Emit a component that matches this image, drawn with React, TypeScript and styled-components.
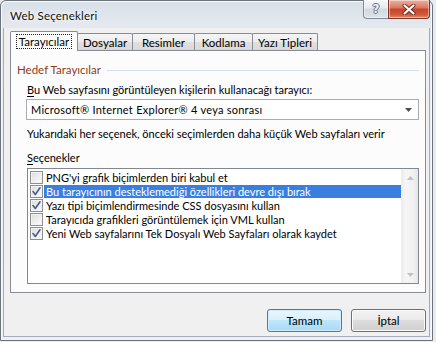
import React from 'react';
import styled, { createGlobalStyle } from 'styled-components';

const FONT = `"Lato", "Noto Sans", sans-serif`;

const GlobalStyle = createGlobalStyle`
  html, body { margin: 0; padding: 0; }
  body {
    width: 436px; height: 342px; overflow: hidden;
    background: #e9edf1;
    font-family: ${FONT};
    font-size: 11px;
    color: #000;
  }
  * { box-sizing: border-box; }
`;

const Window = styled.div`
  width: 433px;
  height: 341px;
  border: 1px solid #6c727a;
  border-radius: 6px 6px 0 0;
  background: linear-gradient(180deg, #d8e0e8 0px, #e4e9ef 26px, #edf0f4 100%);
  box-shadow: inset 1px 1px 0 #f8fafc, inset -1px 0 0 #f8fafc;
  display: flex;
  flex-direction: column;
`;

const TitleBar = styled.div`
  height: 27px;
  flex: none;
  display: flex;
  align-items: flex-start;
  padding: 0 2px 0 9px;
`;

const Title = styled.div`
  flex: 1;
  align-self: center;
  margin-top: 1px;
  font-size: 11.5px;
  letter-spacing: 0.2px;
  color: #111;
  text-shadow: 0 0 6px #ffffff, 0 0 3px #ffffff;
`;

const CaptionGroup = styled.div`
  display: flex;
  margin-top: -1px;
`;

const CaptionButton = styled.div<{ $variant: 'help' | 'close' }>`
  height: 19px;
  width: ${(p) => (p.$variant === 'close' ? 42 : 26)}px;
  margin-left: ${(p) => (p.$variant === 'close' ? -1 : 0)}px;
  border: 1px solid ${(p) => (p.$variant === 'close' ? '#7a3626' : '#7f8a97')};
  border-top: none;
  border-radius: ${(p) => (p.$variant === 'close' ? '0 0 4px 0' : '0 0 0 4px')};
  background: ${(p) =>
    p.$variant === 'close'
      ? 'linear-gradient(180deg, #eab2a3 0%, #dc7a61 42%, #c8462b 52%, #d0573a 80%, #e08a6c 100%)'
      : 'linear-gradient(180deg, #f6f8fa 0%, #e6ebf0 42%, #d2d9e1 52%, #dde3ea 100%)'};
  box-shadow: inset 0 0 0 1px rgba(255, 255, 255, 0.45);
  display: flex;
  align-items: center;
  justify-content: center;
`;

const HelpGlyph = styled.span`
  font-family: "DejaVu Sans", sans-serif;
  font-weight: bold;
  font-size: 12px;
  color: #eef2f6;
  text-shadow: -1px 0 #66717d, 1px 0 #66717d, 0 -1px #66717d, 0 1px #66717d;
  line-height: 1;
`;

const Client = styled.div`
  flex: 1;
  margin: 0 2px 3px 2px;
  background: #f0f0f0;
  border: 1px solid #a3acb7;
  border-top: none;
  display: flex;
  flex-direction: column;
  padding: 3px 3px 0 6px;
`;

const TabStrip = styled.div`
  display: flex;
  align-items: flex-end;
  height: 19px;
  position: relative;
  z-index: 1;
`;

const Tab = styled.div<{ $active?: boolean; $w: number }>`
  width: ${(p) => p.$w}px;
  height: ${(p) => (p.$active ? 20 : 17)}px;
  margin-bottom: ${(p) => (p.$active ? -1 : 0)}px;
  margin-left: -1px;
  &:first-child { margin-left: 0; }
  border: 1px solid #898c95;
  border-bottom: none;
  border-radius: 2px 2px 0 0;
  background: ${(p) =>
    p.$active ? '#fcfcfc' : 'linear-gradient(180deg, #f6f6f6 0%, #ececec 50%, #e0e0e0 51%, #d9d9d9 100%)'};
  position: relative;
  z-index: ${(p) => (p.$active ? 2 : 1)};
  display: flex;
  align-items: center;
  justify-content: center;
  padding-bottom: ${(p) => (p.$active ? 1 : 0)}px;
  font-size: 11.5px;
  color: #000;
`;

const FocusText = styled.span`
  outline: 1px dotted #222;
  padding: 0 2px;
  line-height: 13px;
`;

const Panel = styled.div`
  height: 243px;
  flex: none;
  border: 1px solid #898c95;
  background: #fcfcfc;
  padding: 11px 6px 0 6px;
  display: flex;
  flex-direction: column;
`;

const GroupHeader = styled.div`
  display: flex;
  align-items: center;
  gap: 6px;
  line-height: 15px;
  font-size: 11.5px;
  color: #8e3c20;
`;

const GroupLine = styled.div`
  flex: 1;
  height: 1px;
  background: #d6dde5;
  margin-top: 1px;
`;

const Section = styled.div`
  display: flex;
  flex-direction: column;
  padding-left: 10px;
`;

const Text = styled.div<{ $mt: number }>`
  margin-top: ${(p) => p.$mt}px;
  line-height: 15px;
  white-space: nowrap;
`;

const Combo = styled.div`
  margin-top: 2px;
  margin-left: -1px;
  height: 21px;
  border: 1px solid #a7abb2;
  background: #ffffff;
  display: flex;
  align-items: center;
  padding: 0 6px 0 4px;
`;

const ComboText = styled.span`
  flex: 1;
  white-space: nowrap;
  letter-spacing: 0.25px;
`;

const List = styled.div`
  margin-top: 3px;
  height: 116px;
  border: 1px solid #838790;
  background: #ffffff;
  display: flex;
`;

const Rows = styled.div`
  flex: 1;
  padding-top: 1px;
  display: flex;
  flex-direction: column;
`;

const Row = styled.div`
  height: 14px;
  display: flex;
  align-items: center;
  padding-left: 2px;
`;

const CheckBox = styled.div`
  width: 13px;
  height: 13px;
  flex: none;
  border: 1px solid #8e8f8f;
  background: linear-gradient(135deg, #dcdcdc 0%, #f0f0f0 60%, #fbfbfb 100%);
  box-shadow: inset 0 0 0 1px #f4f4f4;
  display: flex;
  align-items: center;
  justify-content: center;
`;

const RowLabel = styled.div<{ $selected?: boolean }>`
  flex: 1;
  margin-left: 1px;
  height: 13px;
  line-height: 13px;
  padding-left: 2px;
  white-space: nowrap;
  background: ${(p) => (p.$selected ? '#3a7fdf' : 'transparent')};
  color: ${(p) => (p.$selected ? '#ffffff' : '#000000')};
`;

const ScrollBar = styled.div`
  width: 17px;
  flex: none;
  background: linear-gradient(90deg, #ebebeb 0%, #f6f6f6 20%, #f1f1f1 70%, #e6e6e6 100%);
  border-left: 1px solid #f0f0f0;
  display: flex;
  flex-direction: column;
  justify-content: space-between;
`;

const ScrollArrow = styled.div`
  height: 17px;
  display: flex;
  align-items: center;
  justify-content: center;
`;

const ButtonRow = styled.div`
  margin-top: 16px;
  display: flex;
  justify-content: flex-end;
  gap: 9px;
`;

const Button = styled.div<{ $default?: boolean }>`
  width: 75px;
  height: 23px;
  border: 1px solid ${(p) => (p.$default ? '#3c7fb1' : '#707070')};
  border-radius: 3px;
  background: ${(p) =>
    p.$default
      ? 'linear-gradient(180deg, #eaf6fd 0%, #d9f0fc 45%, #bee6fd 50%, #a7d9f5 100%)'
      : 'linear-gradient(180deg, #f2f2f2 0%, #ebebeb 45%, #dddddd 50%, #cfcfcf 100%)'};
  box-shadow: inset 0 0 0 1px ${(p) => (p.$default ? '#d0ecfb' : '#fbfbfb')};
  display: flex;
  align-items: center;
  justify-content: center;
  font-size: 11.5px;
  color: #000;
`;

const U = styled.span`
  text-decoration: underline;
  text-underline-offset: 2px;
`;

const CheckMark = () => (
  <svg width="9" height="9" viewBox="0 0 9 9">
    <path d="M1 4.6 L3.3 7.5 L8 0.8" fill="none" stroke="#4a5c90" strokeWidth="1.6" strokeLinecap="round" strokeLinejoin="round" />
  </svg>
);

const CloseGlyph = () => (
  <svg width="14" height="11" viewBox="0 0 14 11">
    <path d="M2.5 1.5 L11.5 9.5 M11.5 1.5 L2.5 9.5" stroke="#6b2a1c" strokeWidth="4" strokeLinecap="round" />
    <path d="M2.5 1.5 L11.5 9.5 M11.5 1.5 L2.5 9.5" stroke="#ffffff" strokeWidth="2.2" strokeLinecap="round" />
  </svg>
);

const Arrow = ({ up, color }: { up?: boolean; color: string }) => (
  <svg width="7" height="4" viewBox="0 0 7 4">
    <path d={up ? 'M0 4 L3.5 0 L7 4 Z' : 'M0 0 L7 0 L3.5 4 Z'} fill={color} />
  </svg>
);

const tabs = [
  { label: 'Tarayıcılar', w: 68, active: true },
  { label: 'Dosyalar', w: 56 },
  { label: 'Resimler', w: 63 },
  { label: 'Kodlama', w: 59 },
  { label: 'Yazı Tipleri', w: 66 },
];

const options = [
  { label: "PNG'yi grafik biçimlerden biri kabul et", checked: false },
  { label: 'Bu tarayıcının desteklemediği özellikleri devre dışı bırak', checked: true, selected: true },
  { label: 'Yazı tipi biçimlendirmesinde CSS dosyasını kullan', checked: true },
  { label: 'Tarayıcıda grafikleri görüntülemek için VML kullan', checked: false },
  { label: 'Yeni Web sayfalarını Tek Dosyalı Web Sayfaları olarak kaydet', checked: true },
];

export default function App() {
  return (
    <>
      <GlobalStyle />
      <Window>
        <TitleBar>
          <Title>Web Seçenekleri</Title>
          <CaptionGroup>
            <CaptionButton $variant="help">
              <HelpGlyph>?</HelpGlyph>
            </CaptionButton>
            <CaptionButton $variant="close">
              <CloseGlyph />
            </CaptionButton>
          </CaptionGroup>
        </TitleBar>
        <Client>
          <TabStrip>
            {tabs.map((t) => (
              <Tab key={t.label} $w={t.w} $active={t.active}>
                {t.active ? <FocusText>{t.label}</FocusText> : t.label}
              </Tab>
            ))}
          </TabStrip>
          <Panel>
            <GroupHeader>
              <span>Hedef Tarayıcılar</span>
              <GroupLine />
            </GroupHeader>
            <Section>
              <Text $mt={5}>
                <U>B</U>u Web sayfasını görüntüleyen kişilerin kullanacağı tarayıcı:
              </Text>
              <Combo>
                <ComboText>Microsoft® Internet Explorer® 4 veya sonrası</ComboText>
                <Arrow color="#4d4d4d" />
              </Combo>
              <Text $mt={6}>Yukarıdaki her seçenek, önceki seçimlerden daha küçük Web sayfaları verir</Text>
              <Text $mt={9}>
                <U>S</U>eçenekler
              </Text>
              <List>
                <Rows>
                  {options.map((o) => (
                    <Row key={o.label}>
                      <CheckBox>{o.checked && <CheckMark />}</CheckBox>
                      <RowLabel $selected={o.selected}>{o.label}</RowLabel>
                    </Row>
                  ))}
                </Rows>
                <ScrollBar>
                  <ScrollArrow>
                    <Arrow up color="#c2c2c2" />
                  </ScrollArrow>
                  <ScrollArrow>
                    <Arrow color="#c2c2c2" />
                  </ScrollArrow>
                </ScrollBar>
              </List>
            </Section>
          </Panel>
          <ButtonRow>
            <Button $default>Tamam</Button>
            <Button>İptal</Button>
          </ButtonRow>
        </Client>
      </Window>
    </>
  );
}
